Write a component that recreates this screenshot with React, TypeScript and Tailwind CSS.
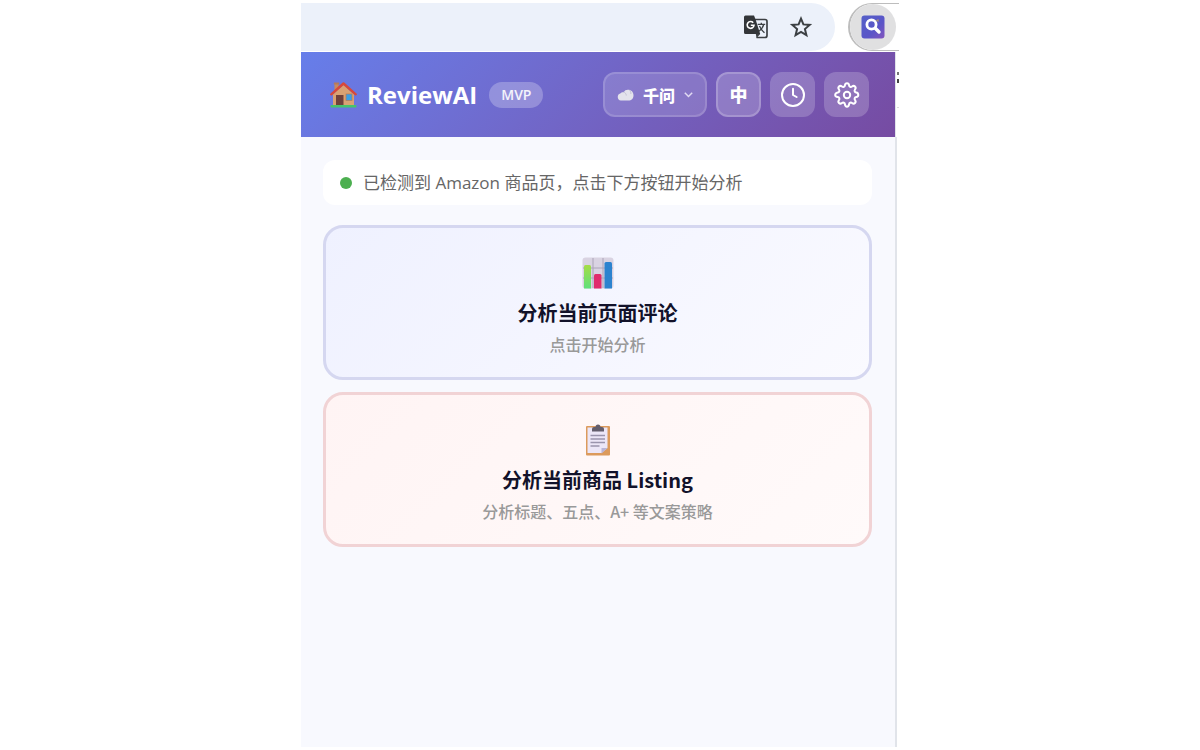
import React, { useState } from 'react';

const latinFont = "font-['Open_Sans','Noto_Sans_CJK_SC',sans-serif]";
const cjkFont = "font-['Noto_Sans_CJK_SC',sans-serif]";

function TranslateIcon() {
  return (
    <svg width="26" height="26" viewBox="0 0 26 26" fill="none">
      <path d="M11 5.500h11a2 2 0 0 1 2 2v14a2 2 0 0 1-2 2h-8.500" stroke="#3c4043" strokeWidth="1.700" />
      <path d="M2.500 1.500h8.500l1.600 4 4.600 14.500H2.500a1.500 1.500 0 0 1-1.500-1.500V3a1.500 1.500 0 0 1 1.500-1.500z" fill="#333639" />
      <path d="M12.800 20h4.400l-3.600 4z" fill="#3c4043" />
      <path d="M10.200 8.700A3.400 3.400 0 1 0 11 11.200H7.800" stroke="#fff" strokeWidth="1.600" />
      <path d="M14.700 10.300h7.500M18.300 8.800v1.500M20.700 10.500c-.7 3-2.400 5-4.700 6.700M16.500 12c1 2.700 3 5 5 6.700" stroke="#3c4043" strokeWidth="1.300" />
    </svg>
  );
}

function StarIcon() {
  return (
    <svg width="24" height="24" viewBox="0 0 24 24" fill="none" stroke="#3c4043" strokeWidth="2">
      <path d="M12 3.600l2.400 5.800 6.300.5-4.800 4.100 1.500 6.100-5.400-3.300-5.400 3.300 1.500-6.100-4.800-4.100 6.300-.5z" />
    </svg>
  );
}

function ExtensionIcon() {
  return (
    <svg width="24" height="24" viewBox="0 0 24 24" fill="none">
      <defs>
        <linearGradient id="ext" x1="0" y1="0" x2="1" y2="1">
          <stop offset="0" stopColor="#5560c8" />
          <stop offset=".6" stopColor="#5a55c8" />
          <stop offset="1" stopColor="#8455bd" />
        </linearGradient>
      </defs>
      <rect x=".5" y=".5" width="23" height="23" rx="3" fill="url(#ext)" />
      <circle cx="10.500" cy="9.500" r="4.600" stroke="#fff" strokeWidth="2.800" />
      <path d="M14.500 13.500l3.500 3.500" stroke="#fff" strokeWidth="3.400" strokeLinecap="round" />
      <path d="M14.500 5.500l3-1.500.2 3z" fill="#a48e78" />
    </svg>
  );
}

function HouseIcon() {
  return (
    <svg width="27" height="27" viewBox="0 0 27 27">
      <rect x="4.500" y="2.500" width="4" height="8" fill="#c98a5c" />
      <rect x="3.800" y="1.500" width="5.400" height="2" rx=".5" fill="#b57a5c" />
      <path d="M3 13.500L13.500 4 24 13.500V24H3z" fill="#d9a273" />
      <path d="M1.300 13.300L13.500 2.500l12.200 10.800" fill="none" stroke="#d8483a" strokeWidth="2.400" strokeLinecap="round" strokeLinejoin="round" />
      <path d="M6 14h7.500v10.500H6z" fill="#70413b" />
      <rect x="16" y="13" width="6" height="6.500" fill="#3ba0e6" stroke="#b9784f" strokeWidth=".7" />
      <rect x=".5" y="24" width="26" height="2.500" rx="1" fill="#45c46b" />
    </svg>
  );
}

function CloudIcon() {
  return (
    <svg width="17" height="12" viewBox="0 0 17 12">
      <path d="M3.800 11.500A3.600 3.600 0 0 1 3.300 4.500C4.200 3.200 5.600 3 6.600 3.200A5 5 0 0 1 11 .8c3.300 0 5.500 2.400 5.500 5.600 0 3-2.100 5.100-5 5.100z" fill="#e4e3ec" />
      <path d="M6.600 3.200c1.600.3 2.600 1.600 2.700 3.300M12.500 1.200c1 .9 1.500 2.200 1.400 3.800" fill="none" stroke="#c4c2d4" strokeWidth="1" />
    </svg>
  );
}

function ClockIcon() {
  return (
    <svg width="26" height="26" viewBox="0 0 26 26" fill="none" stroke="#fff" strokeWidth="2" strokeLinecap="round" strokeLinejoin="round">
      <circle cx="13" cy="13" r="11" />
      <path d="M13 6.800V13l3.600 2" />
    </svg>
  );
}

function GearIcon() {
  // eight teeth, drawn on a 26px box
  return (
    <svg width="26" height="26" viewBox="0 0 26 26" fill="none" stroke="#fff" strokeWidth="2" strokeLinejoin="round">
      <circle cx="13" cy="13" r="3.200" />
      <path d="M10.900 3.300C11.100 1.800 11.800 1.200 13 1.200s1.900.6 2.100 2.100c.2 1.500 1.700 2.100 2.900 1.200 1.200-.9 2.200-.8 3 0s.9 1.800 0 3c-.9 1.200-.3 2.700 1.200 2.900s2.100 1 2.100 2.600-.6 1.900-2.100 2.100-2.100 1.700-1.200 2.900c.9 1.200.8 2.200 0 3s-1.800.9-3 0c-1.200-.9-2.700-.3-2.900 1.200s-.9 2.600-2.100 2.600-1.900-1.100-2.100-2.600-1.700-2.100-2.900-1.200c-1.200.9-2.200.8-3 0s-.9-1.800 0-3c.9-1.200.3-2.700-1.200-2.900s-2.600-.9-2.600-2.100 1.100-2.400 2.600-2.600S5.900 8.700 5 7.500c-.9-1.200-.8-2.200 0-3s1.800-.9 3 0c1.200.9 2.700.3 2.900-1.200z" />
    </svg>
  );
}

function ChartIcon() {
  return (
    <svg width="32" height="32" viewBox="0 0 32 32">
      <rect x=".5" y=".5" width="31" height="31" rx="3" fill="#d9d3e2" />
      <path d="M1 11h30M1 21h30M11 1v30M21 1v30" stroke="#aba4b8" strokeWidth="1" />
      <defs>
        <linearGradient id="barGreen" x1="0" y1="0" x2="0" y2="1">
          <stop offset="0" stopColor="#a5dc45" />
          <stop offset="1" stopColor="#5fe07c" />
        </linearGradient>
      </defs>
      <path d="M2 31.500V9.500A1.500 1.500 0 0 1 3.500 8h4A1.500 1.500 0 0 1 9 9.500v22z" fill="url(#barGreen)" />
      <path d="M12 31.500v-13a1.500 1.500 0 0 1 1.500-1.500h4.500a1.500 1.500 0 0 1 1.500 1.500v13z" fill="#e02c6d" />
      <path d="M22.500 31.500v-25A1.500 1.500 0 0 1 24 5h4.500A1.500 1.500 0 0 1 30 6.500v25z" fill="#2c83cf" />
    </svg>
  );
}

function ClipboardIcon() {
  return (
    <svg width="32" height="32" viewBox="0 0 32 32">
      <rect x="4" y="2" width="24" height="29.500" rx="1" fill="#dc9a5c" />
      <path d="M5.500 3.500h20V24l-6 5h-14z" fill="#ece6f7" />
      <path d="M25.500 24l-6 5.500V24z" fill="#b9b4d6" />
      <path d="M8.500 11.500h14.500M8.500 15h14.500M8.500 18.500h14.500M8.500 22h9" stroke="#9a94ad" strokeWidth="1.300" />
      <path d="M10 7.500V5a2 2 0 0 1 2-2h1.500a2.500 2.500 0 0 1 5 0H20a2 2 0 0 1 2 2v2.500z" fill="#635d6c" />
    </svg>
  );
}

function BrowserBar() {
  return (
    <div className="flex h-[49px] items-start justify-between">
      <div className="flex h-12 flex-1 items-center justify-end gap-5 rounded-r-full bg-[#ecf1fa] pr-[22px]">
        <button aria-label="翻译"><TranslateIcon /></button>
        <button aria-label="收藏"><StarIcon /></button>
      </div>
      <div className="ml-[13px] flex h-12 w-[51px] rounded-l-full border-y border-l-2 border-[#bdbdbd]">
        <button aria-label="扩展" className="flex w-[46px] items-center justify-center rounded-full bg-[#e0e0e1]">
          <ExtensionIcon />
        </button>
      </div>
    </div>
  );
}

function Header() {
  const [model, setModel] = useState('qwen');

  return (
    <header className="flex h-[85px] items-center justify-between bg-linear-135 from-[#667eea] to-[#764ba2] pr-[26px] pl-[29px] text-white">
      <div className="flex items-center">
        <HouseIcon />
        <h1 className={`ml-[10px] text-2xl font-bold ${latinFont}`}>ReviewAI</h1>
        <span className={`ml-3 rounded-full bg-white/25 px-3 text-[14px] leading-[26px] font-semibold text-white/90 ${latinFont}`}>MVP</span>
      </div>
      <div className="flex items-center gap-[9px]">
        <label className="flex h-[45px] items-center rounded-xl border-2 border-white/15 bg-white/15 px-3">
          <CloudIcon />
          <select
            aria-label="模型"
            value={model}
            onChange={(e) => setModel(e.target.value)}
            className={`ml-[9px] appearance-none bg-transparent text-[16px] font-black outline-none ${cjkFont}`}
          >
            <option value="qwen">千问</option>
          </select>
          <svg className="ml-2" width="9" height="6" viewBox="0 0 9 6" fill="none" stroke="#e1daf2" strokeWidth="1.500">
            <path d="M.8.8l3.700 3.700L8.200.8" />
          </svg>
        </label>
        <button className={`h-[45px] w-[45px] rounded-xl border-2 border-white/20 bg-white/20 text-[18px] font-black ${cjkFont}`}>中</button>
        <button aria-label="历史" className="flex h-[45px] w-[45px] items-center justify-center rounded-xl bg-white/20"><ClockIcon /></button>
        <button aria-label="设置" className="flex h-[45px] w-[45px] items-center justify-center rounded-xl bg-white/20"><GearIcon /></button>
      </div>
    </header>
  );
}

function App() {
  return (
    <div className="min-h-screen bg-white py-[3px]">
      <div className="mx-auto flex min-h-[calc(100vh-6px)] w-full max-w-[598px] flex-col">
        <BrowserBar />
        <div className="flex flex-1">
          <div className="flex min-w-0 flex-1 flex-col">
            <Header />
            <main className="flex flex-1 flex-col bg-[#f8f9fe] pt-[23px] pr-[23px] pl-[22px]">
              <div className={`flex h-[45px] items-center rounded-xl bg-white px-[17px] text-[17px] text-[#666666] ${latinFont}`}>
                <span className="mr-[11px] h-3 w-3 rounded-full bg-[#4caf50]" />
                <p>已检测到 Amazon 商品页，点击下方按钮开始分析</p>
              </div>
              <button className={`mt-5 flex h-[155px] flex-col items-center rounded-[20px] border-[3px] border-[#d5d7f0] bg-linear-135 from-[#eff1ff] to-[#fafaff] pt-[29px] ${cjkFont}`}>
                <ChartIcon />
                <span className="mt-[10px] text-[20px] leading-[28px] font-bold text-[#12122a]">分析当前页面评论</span>
                <span className="mt-1 text-[16px] leading-[26px] font-medium text-[#999999]">点击开始分析</span>
              </button>
              <button className={`mt-3 flex h-[155px] flex-col items-center rounded-[20px] border-[3px] border-[#f1d3d5] bg-linear-135 from-[#fff4f4] to-[#fffafa] pt-[29px] ${cjkFont}`}>
                <ClipboardIcon />
                <span className="mt-[10px] text-[20px] leading-[28px] font-bold text-[#12122a]">分析当前商品 Listing</span>
                <span className="mt-1 text-[16px] leading-[26px] font-medium text-[#999999]">分析标题、五点、A+ 等文案策略</span>
              </button>
            </main>
          </div>
          {/* sliver of the page behind the side panel */}
          <div className="flex w-1 flex-col">
            <div className="flex h-[85px] flex-col items-end gap-1 border-l border-[#e1e4ea] pt-5">
              <span className="h-[3px] w-[2px] bg-[#777777]" />
              <span className="h-1 w-[2px] bg-[#444444]" />
              <span className="mt-5 h-px w-[2px] bg-[#dddddd]" />
            </div>
            <div className="flex-1 border-l-2 border-[#e1e4ea]" />
          </div>
        </div>
      </div>
    </div>
  );
}

export default App;
